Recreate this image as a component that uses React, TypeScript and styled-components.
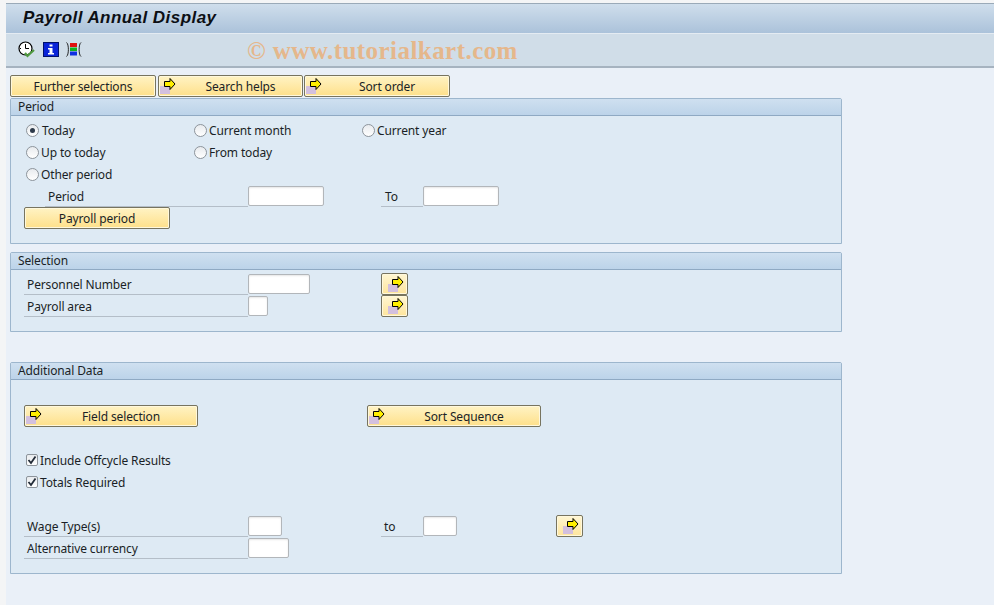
import React from "react";
import styled, { createGlobalStyle } from "styled-components";

const Global = createGlobalStyle`
  html, body { margin: 0; padding: 0; height: 100%; background: #f4f5f6; }
  #root { height: 605px; width: 994px; overflow: hidden; }
  * { box-sizing: border-box; }
`;

const Shell = styled.div`
  position: relative;
  width: 994px;
  height: 605px;
  padding: 3px 0 0 6px;
  font-family: "Noto Sans", Tahoma, sans-serif;
  font-size: 12px;
  letter-spacing: -0.13px;
  color: #1a1f26;
`;
const TitleBar = styled.div`
  height: 31px;
  padding: 0 0 2px 17px;
  display: flex;
  align-items: center;
  background: linear-gradient(#cfdeec, #abc2da);
  border-top: 1px solid #9aaab8;
  border-bottom: 1px solid #e4ebf2;
`;
const Title = styled.h1`
  margin: 0;
  font-family: "Liberation Sans", Arial, sans-serif;
  font-size: 17px;
  font-weight: bold;
  font-style: italic;
  letter-spacing: 0.45px;
  color: #0c0f14;
`;
const Toolbar = styled.div`
  height: 34px;
  padding: 0 0 2px 12px;
  display: flex;
  align-items: center;
  gap: 7px;
  background: #d0dde8;
  border-bottom: 2px solid #a6b3c0;
`;
const Watermark = styled.div`
  position: absolute;
  left: 247px;
  top: 37px;
  font-family: "Liberation Serif", serif;
  font-weight: bold;
  font-size: 25px;
  letter-spacing: 0.45px;
  color: #ecab6d;
  opacity: 0.75;
  white-space: nowrap;
`;
const Body = styled.div`
  height: 538px;
  padding: 7px 0 0 4px;
  background: #eaf0f8;
`;
const TopButtons = styled.div`
  display: flex;
  gap: 2px;
  height: 22px;
`;
const Btn = styled.button<{ $w: number; $ml?: number; $icon?: boolean }>`
  position: relative;
  flex: none;
  width: ${(p) => p.$w}px;
  height: 22px;
  margin: 0 0 0 ${(p) => p.$ml ?? 0}px;
  padding: 0 0 0 ${(p) => (p.$icon ? 20 : 0)}px;
  font: inherit;
  letter-spacing: inherit;
  color: #1a1f26;
  background: linear-gradient(#fff3c4, #fee08a);
  border: 1px solid #77745f;
  border-radius: 2px;
  box-shadow: inset 0 0 0 1px #fff8dc;
`;
const BtnIcon = styled.svg`
  position: absolute;
  left: 0;
  top: 0;
`;
const IconBtn = styled(Btn)`
  width: 27px;
  background: linear-gradient(#fff6d2, #fee59c);
  ${BtnIcon} { left: 5px; }
`;
const Group = styled.section<{ $h: number; $mt: number }>`
  width: 832px;
  height: ${(p) => p.$h}px;
  margin-top: ${(p) => p.$mt}px;
  background: #deeaf4;
  border: 1px solid #9db6cd;
  border-radius: 2px 2px 0 0;
`;
const GroupHead = styled.div`
  height: 17px;
  padding-left: 7px;
  line-height: 15px;
  background: linear-gradient(#cfe0f0, #bcd3e9);
  border-bottom: 1px solid #8fa9c3;
`;
const Rows = styled.div<{ $pt: number }>`
  padding-top: ${(p) => p.$pt}px;
`;
const Row = styled.div<{ $pl?: number; $mt?: number }>`
  display: flex;
  align-items: center;
  height: 22px;
  padding-left: ${(p) => p.$pl ?? 13}px;
  margin-top: ${(p) => p.$mt ?? 0}px;
`;
const Option = styled.label<{ $w?: number }>`
  flex: none;
  display: flex;
  align-items: center;
  gap: 2px;
  width: ${(p) => (p.$w ? `${p.$w}px` : "auto")};
  white-space: nowrap;
`;
const Radio = styled.span<{ $on?: boolean }>`
  flex: none;
  display: flex;
  align-items: center;
  justify-content: center;
  width: 13px;
  height: 13px;
  margin: 0 ${(p) => (p.$on ? 1 : 0)}px 0 2px;
  border-radius: 50%;
  border: 1px solid #8d949b;
  background: linear-gradient(#e8ebee, #fff);
  &::after {
    content: "";
    display: ${(p) => (p.$on ? "block" : "none")};
    width: 5px;
    height: 5px;
    border-radius: 50%;
    background: #2d3a4a;
  }
`;
const Check = styled.span`
  flex: none;
  display: flex;
  align-items: center;
  justify-content: center;
  width: 12px;
  height: 12px;
  margin-left: 2px;
  border: 1px solid #8d949b;
  border-radius: 2px;
  background: linear-gradient(#e8ebee, #fff);
`;
const Label = styled.span<{ $w: number; $ml?: number; $pl?: number }>`
  flex: none;
  width: ${(p) => p.$w}px;
  height: 21px;
  margin-left: ${(p) => p.$ml ?? 0}px;
  padding-left: ${(p) => p.$pl ?? 3}px;
  line-height: 22px;
  border-bottom: 1px solid #b4bec8;
  white-space: nowrap;
`;
const Input = styled.input<{ $w: number }>`
  flex: none;
  width: ${(p) => p.$w}px;
  height: 20px;
  margin: 0 0 1px;
  padding: 0;
  background: #fff;
  border: 1px solid #b2b6ba;
  border-radius: 2px;
  box-shadow: inset 0 1px 2px #e6e6e6;
`;
const Gap = styled.span<{ $w: number }>`
  flex: none;
  width: ${(p) => p.$w}px;
`;

const PushIcon = () => (
  <BtnIcon width="20" height="20" viewBox="0 0 20 20">
    <rect x="1" y="10" width="10" height="8" fill="#d3c0de" />
    <path d="M5.500 5.500h5.500V2.500L16 8l-5 5.500v-3H5.500z" fill="#ffee00" stroke="#000" strokeWidth="1" />
  </BtnIcon>
);

const Cb = () => (
  <Check>
    <svg width="10" height="10" viewBox="0 0 10 10">
      <path d="M1.500 5l2.500 3 4.500-6.500" fill="none" stroke="#232c38" strokeWidth="1.800" />
    </svg>
  </Check>
);

export default function App() {
  return (
    <Shell>
      <Global />
      <TitleBar>
        <Title>Payroll Annual Display</Title>
      </TitleBar>
      <Toolbar>
        <svg width="18" height="17" viewBox="0 0 18 17">
          <circle cx="7.500" cy="7.500" r="6.500" fill="#fff" stroke="#000" strokeWidth="1.200" />
          <path d="M7.500 3v4.500H11M2 7.500h1" fill="none" stroke="#000" strokeWidth="1" />
          <path d="M7 12l2.500 3L16 9" fill="none" stroke="#4f9a3f" strokeWidth="2.200" />
        </svg>
        <svg width="16" height="15" viewBox="0 0 16 15">
          <rect width="16" height="15" fill="#00106a" />
          <rect x="1" y="1" width="14" height="13" fill="#0a24d8" />
          <path d="M6.500 2.500h3v2h-3zM5 6h4.500v5H11v1.500H5V11h1.500V7.500H5z" fill="#fff" />
        </svg>
        <svg width="16" height="15" viewBox="0 0 16 15">
          <rect x="4" y="1" width="7" height="4" fill="#e01010" />
          <rect x="4" y="5.500" width="7" height="3.500" fill="#10b020" />
          <rect x="4" y="9.500" width="7" height="4" fill="#1030e0" />
          <path d="M.5 .5c2.500 1.500 2.500 12.500 0 14M15 .5c-2.500 1.500-2.500 12.500 0 14" fill="none" stroke="#111" strokeWidth=".9" />
        </svg>
      </Toolbar>
      <Watermark>© www.tutorialkart.com</Watermark>
      <Body>
        <TopButtons>
          <Btn $w={146}>Further selections</Btn>
          <Btn $w={145} $icon><PushIcon />Search helps</Btn>
          <Btn $w={146} $ml={-1} $icon><PushIcon />Sort order</Btn>
        </TopButtons>
        <Group $h={146} $mt={1}>
          <GroupHead>Period</GroupHead>
          <Rows $pt={3}>
            <Row>
              <Option $w={168}><Radio $on />Today</Option>
              <Option $w={168}><Radio />Current month</Option>
              <Option><Radio />Current year</Option>
            </Row>
            <Row>
              <Option $w={168}><Radio />Up to today</Option>
              <Option><Radio />From today</Option>
            </Row>
            <Row>
              <Option><Radio />Other period</Option>
            </Row>
            <Row $pl={34}>
              <Label $w={203}>Period</Label>
              <Input $w={76} />
              <Label $w={42} $ml={57} $pl={4}>To</Label>
              <Input $w={76} />
            </Row>
            <Row>
              <Btn $w={146}>Payroll period</Btn>
            </Row>
          </Rows>
        </Group>
        <Group $h={80} $mt={8}>
          <GroupHead>Selection</GroupHead>
          <Rows $pt={3}>
            <Row>
              <Label $w={224}>Personnel Number</Label>
              <Input $w={62} />
              <Gap $w={71} />
              <IconBtn $w={27}><PushIcon /></IconBtn>
            </Row>
            <Row>
              <Label $w={224}>Payroll area</Label>
              <Input $w={20} />
              <Gap $w={113} />
              <IconBtn $w={27}><PushIcon /></IconBtn>
            </Row>
          </Rows>
        </Group>
        <Group $h={212} $mt={30}>
          <GroupHead>Additional Data</GroupHead>
          <Rows $pt={25}>
            <Row>
              <Btn $w={174} $icon><PushIcon />Field selection</Btn>
              <Btn $w={174} $ml={169} $icon><PushIcon />Sort Sequence</Btn>
            </Row>
            <Row $mt={22}>
              <Option><Cb />Include Offcycle Results</Option>
            </Row>
            <Row>
              <Option><Cb />Totals Required</Option>
            </Row>
            <Row $mt={22}>
              <Label $w={224}>Wage Type(s)</Label>
              <Input $w={34} />
              <Label $w={42} $ml={99} $pl={3}>to</Label>
              <Input $w={34} />
              <Gap $w={99} />
              <IconBtn $w={27}><PushIcon /></IconBtn>
            </Row>
            <Row>
              <Label $w={224}>Alternative currency</Label>
              <Input $w={41} />
            </Row>
          </Rows>
        </Group>
      </Body>
    </Shell>
  );
}
